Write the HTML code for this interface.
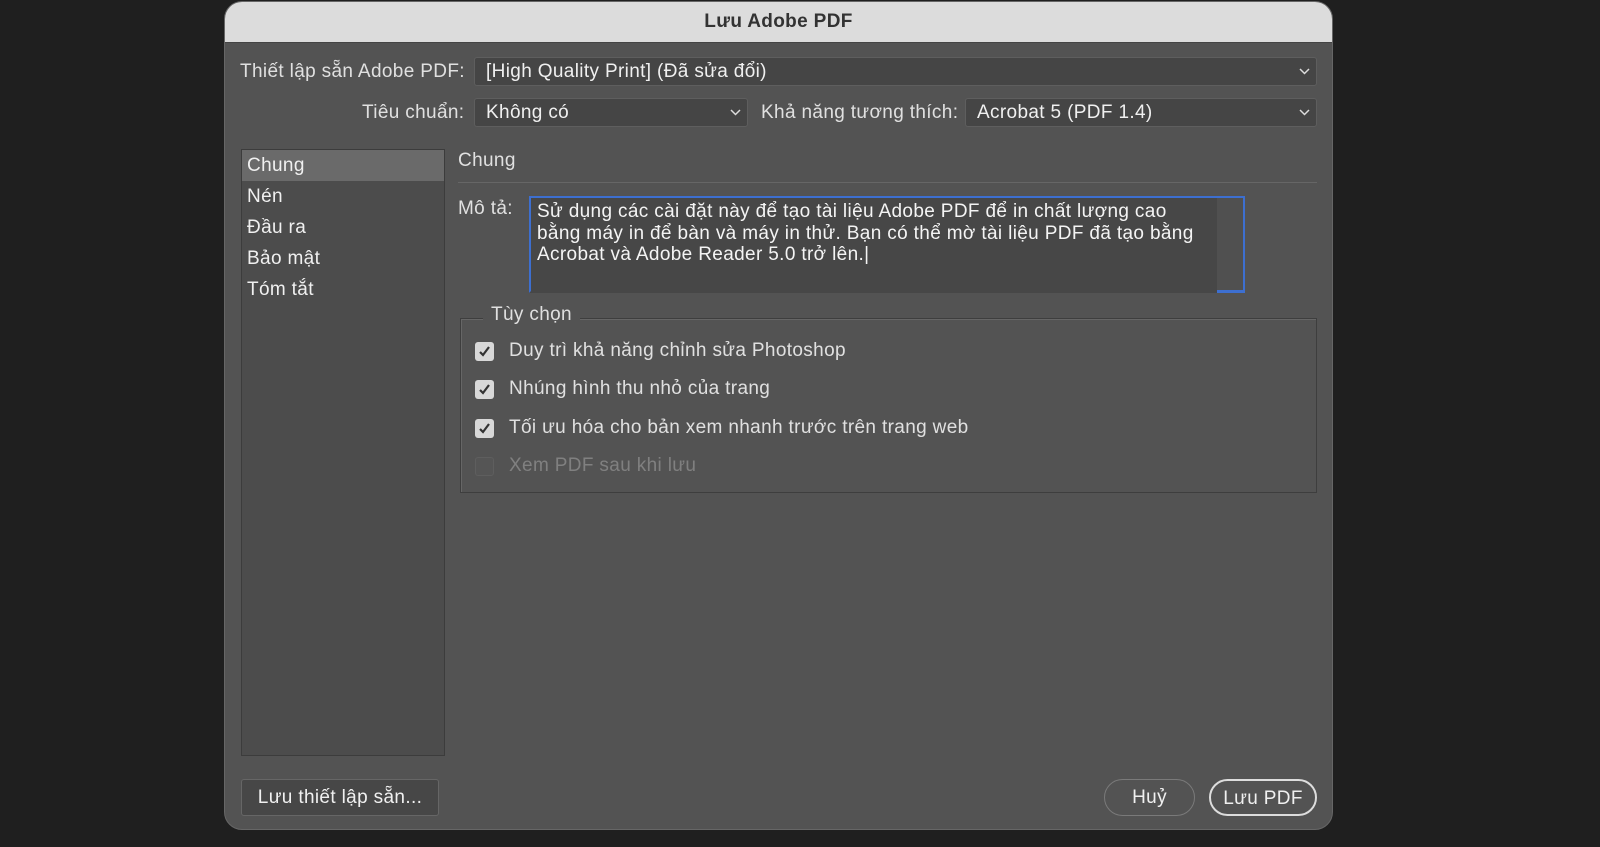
<!DOCTYPE html>
<html><head><meta charset="utf-8"><style>
*{box-sizing:border-box;margin:0;padding:0}
body{width:1600px;height:847px;background:#1f1f1f;font-family:"Liberation Sans","DejaVu Sans",sans-serif;color:#eaeaea;font-size:19px;letter-spacing:0.35px;position:relative;overflow:hidden}
.abs{position:absolute}
#dlg{left:224px;top:1px;width:1109px;height:829px;background:#535353;border-radius:18px;overflow:hidden;border:1px solid #666}
#title{left:0;top:0;width:100%;height:41px;background:#dcdcdc;color:#333;font-weight:bold;font-size:19px;text-align:center;line-height:40px;border-bottom:1px solid #444}
.lbl{white-space:nowrap;color:#e0e0e0}
.sel{background:#454545;border:1px solid #5e5e5e;border-radius:3px;padding-left:11px;line-height:27px;white-space:nowrap;color:#f0f0f0}
.sel svg{position:absolute;right:6px;top:10px}
#list{left:16px;top:147px;width:204px;height:607px;background:#4c4c4c;border:1px solid #3c3c3c}
#list div{height:31px;line-height:31px;padding-left:5px;color:#f0f0f0}
.cb{width:19px;height:19px;border-radius:3px;background:#d8d8d8;position:absolute}
.btn{border:1px solid #7a7a7a;border-radius:19px;text-align:center;line-height:35px;color:#f0f0f0}
</style></head><body>
<div id="dlg" class="abs">
<div id="title" class="abs">Lưu Adobe PDF</div>
<div class="abs lbl" style="left:15px;top:59px">Thiết lập sẵn Adobe PDF:</div>
<div class="abs sel" style="left:249px;top:55px;width:843px;height:29px">[High Quality Print] (Đã sửa đổi)<svg width="11" height="7"><path d="M1 1l4.5 4.5L10 1" stroke="#ddd" stroke-width="1.5" fill="none"/></svg></div>
<div class="abs lbl" style="left:137px;top:100px">Tiêu chuẩn:</div>
<div class="abs sel" style="left:249px;top:96px;width:274px;height:29px">Không có<svg width="11" height="7"><path d="M1 1l4.5 4.5L10 1" stroke="#ddd" stroke-width="1.5" fill="none"/></svg></div>
<div class="abs lbl" style="left:536px;top:100px">Khả năng tương thích:</div>
<div class="abs sel" style="left:740px;top:96px;width:352px;height:29px">Acrobat 5 (PDF 1.4)<svg width="11" height="7"><path d="M1 1l4.5 4.5L10 1" stroke="#ddd" stroke-width="1.5" fill="none"/></svg></div>
<div id="list" class="abs"><div style="background:#6a6a6a">Chung</div><div>Nén</div><div>Đầu ra</div><div>Bảo mật</div><div>Tóm tắt</div></div>
<div class="abs lbl" style="left:233px;top:148px">Chung</div>
<div class="abs" style="left:233px;top:180px;width:859px;height:1px;background:#3a3a3a;border-bottom:1px solid #666"></div>
<div class="abs lbl" style="left:233px;top:196px">Mô tả:</div>
<div class="abs" style="left:304px;top:194px;width:716px;height:97px;background:#474747;border:2px solid #3d6fd0;border-bottom-color:#474747"></div>
<div class="abs" style="left:992px;top:196px;width:26px;height:95px;background:#505050"></div>
<div class="abs" style="left:992px;top:288px;width:28px;height:3px;background:#3d6fd0"></div>
<div class="abs" style="left:312px;top:199px;width:700px;line-height:21.5px;color:#f4f4f4;white-space:nowrap">Sử dụng các cài đặt này để tạo tài liệu Adobe PDF để in chất lượng cao<br>bằng máy in để bàn và máy in thử. Bạn có thể mờ tài liệu PDF đã tạo bằng<br>Acrobat và Adobe Reader 5.0 trở lên.|</div>
<div class="abs" style="left:235px;top:316px;width:857px;height:175px;border:1px solid #3e3e3e;box-shadow:inset 1px 1px 0 #666"></div>
<div class="abs lbl" style="left:258px;top:302px;background:#535353;padding:0 8px">Tùy chọn</div>
<div class="cb" style="left:250px;top:340px"></div><svg class="abs" style="left:253px;top:343px" width="13" height="13"><path d="M2 7l3 3 6-8" stroke="#333" stroke-width="2.2" fill="none"/></svg>
<div class="abs lbl" style="left:284px;top:338px">Duy trì khả năng chỉnh sửa Photoshop</div>
<div class="cb" style="left:250px;top:378px"></div><svg class="abs" style="left:253px;top:381px" width="13" height="13"><path d="M2 7l3 3 6-8" stroke="#333" stroke-width="2.2" fill="none"/></svg>
<div class="abs lbl" style="left:284px;top:376px">Nhúng hình thu nhỏ của trang</div>
<div class="cb" style="left:250px;top:417px"></div><svg class="abs" style="left:253px;top:420px" width="13" height="13"><path d="M2 7l3 3 6-8" stroke="#333" stroke-width="2.2" fill="none"/></svg>
<div class="abs lbl" style="left:284px;top:415px">Tối ưu hóa cho bản xem nhanh trước trên trang web</div>
<div class="cb" style="left:250px;top:455px;background:#555;border:1px solid #5e5e5e"></div>
<div class="abs lbl" style="left:284px;top:453px;color:#808080">Xem PDF sau khi lưu</div>
<div class="abs" style="left:16px;top:777px;width:198px;height:37px;background:#474747;border:1px solid #666;border-radius:3px;text-align:center;line-height:35px;color:#f0f0f0">Lưu thiết lập sẵn...</div>
<div class="abs btn" style="left:879px;top:777px;width:91px;height:37px">Huỷ</div>
<div class="abs btn" style="left:984px;top:777px;width:108px;height:37px;border:2px solid #ddd">Lưu PDF</div>
</div>
</body></html>
